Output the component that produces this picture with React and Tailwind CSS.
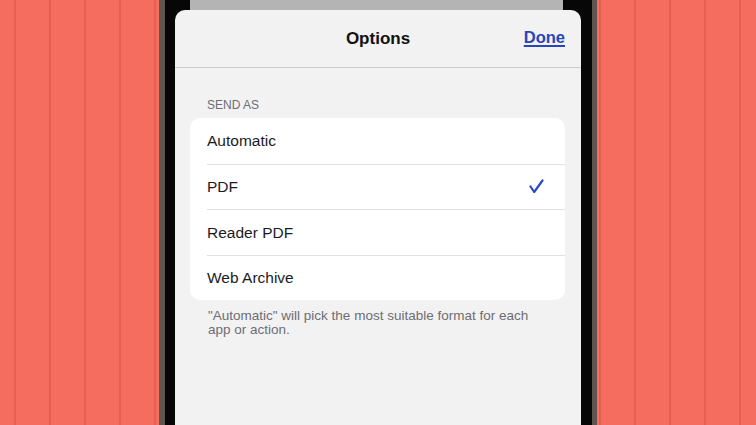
const formats = [
    { name: "Automatic", checked: false },
    { name: "PDF", checked: true },
    { name: "Reader PDF", checked: false },
    { name: "Web Archive", checked: false },
];

function Check() {
    return (
        <svg width="15" height="15" viewBox="0 0 15 15" fill="none">
            <path
                d="M1.5 7.5 L5.2 13 L13.5 1.5"
                stroke="#2b4bc2"
                strokeWidth="2.2"
                strokeLinecap="round"
                strokeLinejoin="round"
            />
        </svg>
    );
}

export default function App() {
    return (
        <div className="flex h-[425px] w-[756px] overflow-hidden font-['Liberation_Sans',Arial,sans-serif]">
            {/* Left backdrop */}
            <div className="w-[159px] shrink-0 bg-[#f46d5f] bg-[repeating-linear-gradient(90deg,transparent_0,transparent_13.5px,#e5614f_14.5px,#e5614f_15.5px,transparent_16.5px,transparent_35px)]" />

            {/* Phone */}
            <div className="flex w-[438px] shrink-0">
                <div className="w-[6px] bg-[#5d564f]" />
                <div className="w-[10px] bg-[#070707]" />
                <div className="flex flex-1 flex-col bg-[#070707]">
                    <div className="ml-[15px] mr-[18px] h-[10px] shrink-0 bg-[#b4b4b4]" />
                    <div className="flex-1 rounded-t-[10px] bg-[#f2f2f2]">
                        {/* Header */}
                        <div className="grid h-[58px] grid-cols-[1fr_auto_1fr] items-center border-b border-[#cdcdcd]">
                            <div />
                            <div className="text-[17px] font-bold text-[#111111]">
                                Options
                            </div>
                            <div className="justify-self-end pr-[16px] text-[16.5px] font-bold text-[#2846b8] underline decoration-[2px] underline-offset-[2px] -translate-y-[1px]">
                                Done
                            </div>
                        </div>

                        <div className="mt-[29px] pl-[32px] text-[12px] leading-[16px] uppercase text-[#6d6d72]">
                            Send As
                        </div>

                        {/* Format list */}
                        <div className="mt-[5px] ml-[15px] mr-[16px] overflow-hidden rounded-[10px] bg-white">
                            {formats.map((f, i) => (
                                <div key={f.name} className="h-[45.5px] pl-[17px]">
                                    <div
                                        className={
                                            "flex h-full items-center justify-between pr-[21px] " +
                                            (i > 0 ? "border-t border-[#e0e0e0]" : "")
                                        }
                                    >
                                        <span className="text-[15.5px] text-[#1c1c1e]">
                                            {f.name}
                                        </span>
                                        {f.checked && <Check />}
                                    </div>
                                </div>
                            ))}
                        </div>

                        <p className="pl-[33px] pr-[40px] pt-[9px] text-[13.5px] leading-[14px] text-[#6d6d72]">
                            "Automatic" will pick the most suitable format for
                            each app or action.
                        </p>
                    </div>
                </div>
                <div className="w-[11px] bg-[#070707]" />
                <div className="w-[5px] bg-[#5d564f]" />
            </div>

            {/* Right backdrop */}
            <div className="flex-1 bg-[#f46d5f] bg-[repeating-linear-gradient(90deg,transparent_0,transparent_1.5px,#e5614f_2.5px,#e5614f_3.5px,transparent_4.5px,transparent_35px)]" />
        </div>
    );
}
